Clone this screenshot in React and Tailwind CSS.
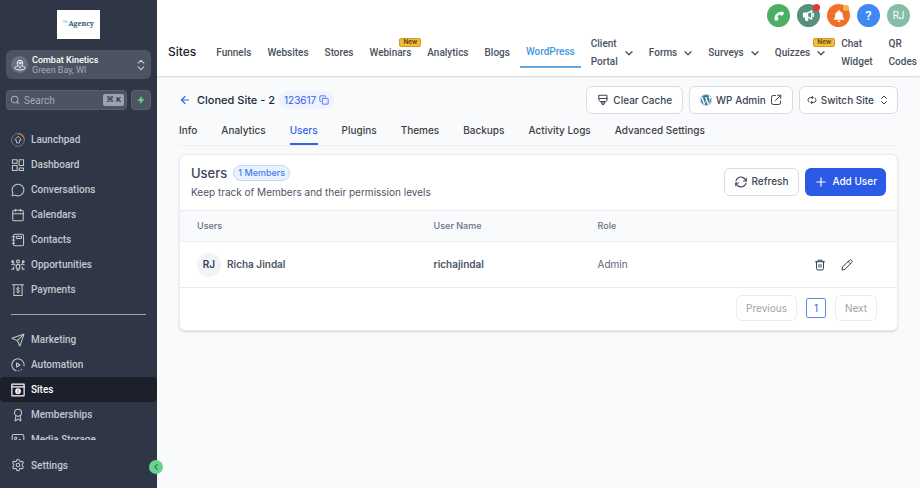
import {
  ArrowLeft,
  Award,
  Calendar,
  ChevronLeft,
  ChevronsUpDown,
  Copy,
  MessageCircle,
  Plus,
  Search,
  Send,
  Settings,
} from "lucide-react";
import { FaBell, FaWordpress } from "react-icons/fa";

function Icon({ children, className = "size-3.5", stroke = 1.8 }) {
  return (
    <svg
      viewBox="0 0 24 24"
      fill="none"
      stroke="currentColor"
      strokeWidth={stroke}
      strokeLinecap="round"
      strokeLinejoin="round"
      className={`shrink-0 ${className}`}
      aria-hidden="true"
    >
      {children}
    </svg>
  );
}

function LaunchpadIcon() {
  return (
    <Icon stroke={1.5}>
      <circle cx="12" cy="12" r="11" className="text-[#7c8492]" stroke="currentColor" />
      <path d="M13 1a11 11 0 0 1 9 6.500" className="text-[#d98038]" stroke="currentColor" strokeWidth="2" />
      <path d="m12 6-5 5v1.500h2.500V17h5v-4.500H17V11z" />
    </Icon>
  );
}

function DashboardIcon() {
  return (
    <Icon>
      <rect x="2.500" y="3" width="8" height="6" />
      <rect x="14" y="3" width="7.500" height="10" />
      <rect x="2.500" y="13" width="8" height="8.500" />
      <rect x="14" y="17" width="7.500" height="4.500" />
    </Icon>
  );
}

function ContactsIcon() {
  return (
    <Icon>
      <rect x="4.500" y="2" width="17" height="20" rx="2.500" />
      <rect x="9" y="5.500" width="9" height="4" rx="1" />
      <path d="M2 6.500h4M2 12h4M2 17.500h4" />
    </Icon>
  );
}

function OpportunitiesIcon() {
  return (
    <Icon stroke={2}>
      <circle cx="12" cy="6" r="2.500" />
      <path d="M12 11c-2 0-3 1.500-3 3.500V17l1.500 1v3h3v-3l1.500-1v-2.500c0-2-1-3.500-3-3.500z" />
      <circle cx="3" cy="6.500" r="1.500" fill="currentColor" />
      <circle cx="21" cy="6.500" r="1.500" fill="currentColor" />
      <path d="M1.500 11.500 5 10l2 2M22.500 11.500 19 10l-2 2M1.500 19h3v-3.500M22.500 19h-3v-3.500" />
    </Icon>
  );
}

function PaymentsIcon() {
  return (
    <Icon>
      <path d="M2.500 3h19M5 3v18.500h14V3" />
      <path d="M14.500 9.500c-.5-1-1.300-1.300-2.500-1.300-1.500 0-2.500.7-2.500 1.900 0 2.700 5.200 1.200 5.200 4 0 1.200-1.200 1.900-2.700 1.900-1.300 0-2.200-.4-2.700-1.400M12 6.800v10.700" strokeWidth="1.500" />
    </Icon>
  );
}

function AutomationIcon() {
  return (
    <Icon>
      <path d="M9 22A10.500 10.500 0 1 1 22.300 13.500" />
      <path d="M9.500 8.500v7l6-3.500z" />
      <path d="M13 22h1M17.500 20l.5-.5" />
    </Icon>
  );
}

function SitesIcon() {
  return (
    <Icon stroke={2}>
      <rect x="1.500" y="2" width="21" height="20" />
      <path d="M1.500 6.500h21" />
      <circle cx="12" cy="14" r="3.800" fill="currentColor" />
      <path d="M12 11.500v5" className="text-[#1b202b]" stroke="currentColor" strokeWidth="1" />
    </Icon>
  );
}

function MediaIcon() {
  return (
    <Icon>
      <rect x="2" y="2.500" width="20" height="18" rx="3" />
      <circle cx="8" cy="9" r="2" />
      <path d="m6 20 9-9 7 6" />
    </Icon>
  );
}

function PinIcon() {
  return (
    <Icon className="size-3" stroke={2}>
      <path d="M12 17c-3.500-3.500-5.500-6-5.500-9a5.500 5.500 0 0 1 11 0c0 3-2 5.500-5.500 9z" />
      <circle cx="12" cy="8" r="2" />
      <path d="M7 14c-3 .8-5 2-5 3.800C2 20.500 6.500 22 12 22s10-1.500 10-4.200c0-1.800-2-3-5-3.800" />
    </Icon>
  );
}

function DownIcon() {
  return (
    <svg viewBox="0 0 8 5" className="h-[5px] w-2 shrink-0" fill="none" stroke="currentColor" strokeWidth="1.300" strokeLinecap="round" strokeLinejoin="round" aria-hidden="true">
      <path d="m1 .8 3 3 3-3" />
    </svg>
  );
}

function BrushIcon() {
  return (
    <Icon className="size-3" stroke={2}>
      <path d="M4 2.500h16V12c0 1.700-1 3-3 3H7c-2 0-3-1.300-3-3z" />
      <path d="M4 9h16M7.500 15l1.500 3h6l1.500-3M9.500 18v1a2.500 2.500 0 0 0 5 0v-1" />
    </Icon>
  );
}

function ExternalIcon() {
  return (
    <Icon className="size-3" stroke={2}>
      <path d="M11 3H6.500A3.500 3.500 0 0 0 3 6.500v11A3.500 3.500 0 0 0 6.500 21h11a3.500 3.500 0 0 0 3.500-3.500V14" />
      <path d="M15 2.500h6.500V9M21.500 2.500 11 13" />
    </Icon>
  );
}

function SwitchIcon() {
  return (
    <Icon className="size-2.5" stroke={2.4}>
      <path d="M14 6H8a6 6 0 0 0-3.500 10.500M10 18h6a6 6 0 0 0 3.500-10.500" />
      <path d="m12 3 3 3-3 3M12 15l-3 3 3 3" />
    </Icon>
  );
}

function RefreshIcon() {
  return (
    <Icon className="size-3" stroke={2.2}>
      <path d="M22.500 4.500v5.500H17M1.500 19.500V14H7" />
      <path d="M22 10A10.300 10.300 0 0 0 5.500 4.500a10 10 0 0 0-3.500 5M2 14a10.300 10.300 0 0 0 16.500 5.500 10 10 0 0 0 3.500-5" />
    </Icon>
  );
}

function TrashIcon() {
  return (
    <Icon className="size-3" stroke={2}>
      <path d="M3 5.500h18M8 5V2.500h8V5M5 5.500V19a3 3 0 0 0 3 3h8a3 3 0 0 0 3-3V5.500M10 11v5.500M14 11v5.500" />
    </Icon>
  );
}

function PencilIcon() {
  return (
    <Icon className="size-3" stroke={2}>
      <path d="m3 16.500-1 5.500 5.500-1L21.300 7.200a3 3 0 0 0 0-4.200l-.3-.3a3 3 0 0 0-4.200 0zM14.500 5l4.500 4.500" />
    </Icon>
  );
}

function PhoneIcon() {
  return (
    <svg viewBox="0 0 24 24" className="size-3" fill="currentColor" stroke="currentColor" strokeLinejoin="round" aria-hidden="true">
      <path d="M4 20.500C1.500 10 10 2 21 4.500L20 10l-5.500.5-.5-2.500c-3 1-5.500 3.500-6 6.500l2.500.5-1 5.500z" />
    </svg>
  );
}

function MegaphoneIcon() {
  return (
    <svg viewBox="0 0 24 24" className="size-[13px]" fill="none" stroke="currentColor" strokeWidth="2.500" strokeLinejoin="round" aria-hidden="true">
      <path d="M3 7.500h7v7H3z" fill="currentColor" />
      <path d="M10 7.500 18 3.500v15l-8-4z" />
      <path d="M6 14.500 7.500 21h3L9 14.500" fill="currentColor" />
      <path d="M21 8.500v5" strokeLinecap="round" />
    </svg>
  );
}

const MAIN_LINKS = [
  { label: "Launchpad", icon: <LaunchpadIcon /> },
  { label: "Dashboard", icon: <DashboardIcon /> },
  { label: "Conversations", icon: <MessageCircle className="size-3.5 shrink-0" strokeWidth={1.8} /> },
  { label: "Calendars", icon: <Calendar className="size-3.5 shrink-0" strokeWidth={1.8} /> },
  { label: "Contacts", icon: <ContactsIcon /> },
  { label: "Opportunities", icon: <OpportunitiesIcon /> },
  { label: "Payments", icon: <PaymentsIcon /> },
];

const MORE_LINKS = [
  { label: "Marketing", icon: <Send className="size-3.5 shrink-0" strokeWidth={1.8} /> },
  { label: "Automation", icon: <AutomationIcon /> },
  { label: "Sites", icon: <SitesIcon />, active: true },
  { label: "Memberships", icon: <Award className="size-3.5 shrink-0" strokeWidth={1.8} /> },
  { label: "Media Storage", icon: <MediaIcon /> },
];

const TOP_LINKS = [
  { label: "Funnels" },
  { label: "Websites" },
  { label: "Stores" },
  { label: "Webinars", isNew: true },
  { label: "Analytics" },
  { label: "Blogs" },
  { label: "WordPress", active: true },
  { label: "Client Portal", menu: true },
  { label: "Forms", menu: true },
  { label: "Surveys", menu: true },
  { label: "Quizzes", menu: true, isNew: true },
  { label: "Chat Widget" },
  { label: "QR Codes" },
];

const TABS = ["Info", "Analytics", "Users", "Plugins", "Themes", "Backups", "Activity Logs", "Advanced Settings"];

const USERS = [{ initials: "RJ", name: "Richa Jindal", username: "richajindal", role: "Admin" }];

function SideLink({ label, icon, active }) {
  return (
    <a
      href="#"
      className={`flex h-[25px] shrink-0 items-center gap-1.5 rounded-sm pl-[11px] ${
        active ? "bg-[#1b202b] text-white" : "text-[#c3c8d0]"
      }`}
    >
      {icon}
      <span>{label}</span>
    </a>
  );
}

function Sidebar() {
  return (
    <aside className="relative flex w-[157px] shrink-0 flex-col bg-[#2f3747] font-['Roboto',sans-serif] text-[10px] font-medium">
      <div className="mx-auto mt-2.5 flex h-[29px] w-[43px] shrink-0 items-center justify-center bg-white font-['Noto_Serif','Liberation_Serif',serif] text-[7px] font-bold text-[#2a5a66]">
        <span className="mb-1 text-[3px] font-normal text-[#4bb5a8]">The</span>Agency
      </div>

      <button
        type="button"
        className="mx-1.5 mt-[11px] flex h-[29px] shrink-0 items-center gap-1 rounded-md bg-[#4c5462] pr-[3px] pl-[5px] text-left"
      >
        <span className="flex size-[17px] shrink-0 items-center justify-center rounded-full bg-[#697180] text-gray-100">
          <PinIcon />
        </span>
        <span className="flex-1 text-[9px] leading-[10px]">
          <span className="block text-white">Combat Kinetics</span>
          <span className="block font-normal text-[#a5abb6]">Green Bay, WI</span>
        </span>
        <ChevronsUpDown className="size-3.5 text-gray-300" strokeWidth={1.8} />
      </button>

      <div className="mx-1.5 mt-[11px] flex shrink-0 gap-1">
        <label className="flex h-5 min-w-0 flex-1 items-center gap-1 rounded border border-[#596170] bg-[#4c5462] pr-[2px] pl-[3px] text-[#a5abb6]">
          <Search className="size-2.5 shrink-0" strokeWidth={2.5} />
          <input
            type="text"
            aria-label="Search"
            placeholder="Search"
            className="w-0 min-w-0 flex-1 font-normal outline-none placeholder:text-[#a5abb6]"
          />
          <kbd className="rounded-xs bg-[#9ca2af] px-[3px] font-['Roboto',sans-serif] text-[8px] leading-3 font-medium text-[#232936]">⌘ K</kbd>
        </label>
        <button
          type="button"
          aria-label="Quick actions"
          className="flex size-5 items-center justify-center rounded border border-[#596170] bg-[#4c5462] text-[#62d399]"
        >
          <svg viewBox="0 0 24 24" className="size-2" fill="currentColor" stroke="currentColor" strokeWidth="2" strokeLinejoin="round" aria-hidden="true">
            <path d="M13.500 2 3 14h8l-1 8L21 10h-8z" />
          </svg>
        </button>
      </div>

      <nav className="mt-[17px] flex min-h-0 flex-1 flex-col overflow-hidden">
        {MAIN_LINKS.map((link) => (
          <SideLink key={link.label} {...link} />
        ))}
        <hr className="mx-[11px] mt-3 mb-3 shrink-0 border-[#a0a6b0]" />
        {MORE_LINKS.map((link) => (
          <SideLink key={link.label} {...link} />
        ))}
      </nav>

      <div className="flex h-12 shrink-0 flex-col justify-center pt-0.5">
        <SideLink label="Settings" icon={<Settings className="size-3.5 shrink-0" strokeWidth={1.8} />} />
      </div>

      <button
        type="button"
        aria-label="Collapse sidebar"
        className="absolute -right-1.5 bottom-3.5 z-10 flex size-3.5 items-center justify-center rounded-full bg-[#68d391] text-[#22543d]"
      >
        <ChevronLeft className="size-2.5" strokeWidth={2.5} />
      </button>
    </aside>
  );
}

function TopBar() {
  const circle = "relative flex size-[23px] items-center justify-center rounded-full text-white";

  return (
    <header className="flex h-[76px] shrink-0 flex-col bg-white font-['Roboto',sans-serif] shadow-[0_1px_2px_rgba(0,0,0,0.16)]">
      <div className="flex h-[27px] items-end justify-end gap-[7px] pr-2.5">
        <button type="button" aria-label="Call" className={`${circle} bg-[#4caf64]`}>
          <PhoneIcon />
        </button>
        <button type="button" aria-label="Announcements" className={`${circle} bg-[#55917f]`}>
          <MegaphoneIcon />
          <span className="absolute top-0 right-0 size-[7px] rounded-full bg-[#ef3329]" />
        </button>
        <button type="button" aria-label="Notifications" className={`${circle} bg-[#f0702a]`}>
          <FaBell className="size-3" />
          <span className="absolute top-px right-px size-1.5 rounded-full bg-[#f6b63c]" />
        </button>
        <button type="button" aria-label="Help" className={`${circle} bg-[#4189f2] text-[13px] font-medium`}>
          ?
        </button>
        <button type="button" aria-label="Account" className={`${circle} bg-[#86bda6] text-[10px]`}>
          RJ
        </button>
      </div>

      <div className="flex h-[49px] items-center pl-[11px]">
        <h1 className="mr-5 font-['Inter',sans-serif] text-[12px] font-medium text-[#1a202c]">Sites</h1>
        <nav className="flex h-full items-center gap-4 pt-[3px] text-[10px] leading-[18px] font-medium text-[#4a5160]">
          {TOP_LINKS.map(({ label, menu, isNew, active }) => (
            <a
              key={label}
              href="#"
              className={`relative flex items-center gap-[7px] ${
                active ? "-mx-1.5 h-[30px] border-b-2 border-[#62a8de] px-1.5 text-[#4299e1]" : ""
              }`}
            >
              <span className="w-min">{label}</span>
              {menu && <DownIcon />}
              {isNew && (
                <span className="absolute -top-1.5 -right-2.5 rounded-xs border border-[#d39b24] bg-[#f3bd3a] px-[3px] text-[7px] leading-[7px] text-[#5c4210]">
                  New
                </span>
              )}
            </a>
          ))}
        </nav>
      </div>
    </header>
  );
}

function OutlineButton({ children, className = "" }) {
  return (
    <button
      type="button"
      className={`flex h-7 items-center gap-1 rounded-md border border-[#d9dce3] bg-white text-[10px] font-medium text-[#3b4556] ${className}`}
    >
      {children}
    </button>
  );
}

function UsersCard() {
  return (
    <section className="mt-2 overflow-hidden rounded-md border border-[#eaecf0] bg-white shadow-[0_1px_2px_rgba(16,24,40,0.16)]">
      <div className="flex h-[55px] items-center justify-between px-[11px] pb-0.5">
        <div>
          <div className="flex items-center gap-1.5">
            <h2 className="text-[13px] leading-5 font-medium text-[#3b4556]">Users</h2>
            <span className="rounded-full border border-[#bfd6fd] bg-[#eaf2ff] px-1 text-[9px] leading-[14px] font-medium text-[#3f80ee]">
              1 Members
            </span>
          </div>
          <p className="text-[10px] leading-[18px] text-[#4b5565]">Keep track of Members and their permission levels</p>
        </div>
        <div className="flex gap-1.5">
          <OutlineButton className="px-2.5">
            <RefreshIcon />
            Refresh
          </OutlineButton>
          <button
            type="button"
            className="flex h-7 items-center gap-1 rounded-md bg-[#2b5be6] px-[9px] text-[10px] font-medium text-white"
          >
            <Plus className="size-3.5" strokeWidth={2} />
            Add User
          </button>
        </div>
      </div>

      <table className="w-full table-fixed text-left text-[10px] text-[#4b5565]">
        <thead className="border-y border-[#eaecf0] bg-[#f9fafb] text-[9px] text-[#667085]">
          <tr className="h-[31px]">
            <th className="w-[33%] pl-[17px] font-medium">Users</th>
            <th className="w-[23%] pl-[17px] font-medium">User Name</th>
            <th className="w-[22%] pl-4 font-medium">Role</th>
            <th aria-label="Actions" />
          </tr>
        </thead>
        <tbody>
          {USERS.map((user) => (
            <tr key={user.username} className="h-[46px] border-b border-[#eaecf0]">
              <td className="pl-[17px]">
                <div className="flex items-center gap-1.5 font-semibold">
                  <span className="flex size-6 items-center justify-center rounded-full bg-[#f1f3f7] text-[#344054]">
                    {user.initials}
                  </span>
                  {user.name}
                </div>
              </td>
              <td className="pl-[17px] font-semibold">{user.username}</td>
              <td className="pl-4 text-[#5d6676]">{user.role}</td>
              <td className="pr-11">
                <div className="flex justify-end gap-[15px] text-[#344054]">
                  <button type="button" aria-label="Delete user">
                    <TrashIcon />
                  </button>
                  <button type="button" aria-label="Edit user">
                    <PencilIcon />
                  </button>
                </div>
              </td>
            </tr>
          ))}
        </tbody>
      </table>

      <div className="flex h-[42px] items-center justify-end gap-[9px] pr-5 pb-0.5 text-[10px] text-[#9ea3ad]">
        <button type="button" disabled className="h-[26px] rounded-md border border-[#eaecf0] px-[9px]">
          Previous
        </button>
        <button type="button" className="size-5 rounded-xs border border-[#6487ee] text-[#3561e8]">
          1
        </button>
        <button type="button" disabled className="h-[26px] rounded-md border border-[#eaecf0] px-[9px]">
          Next
        </button>
      </div>
    </section>
  );
}

export default function App() {
  return (
    <div className="flex h-screen overflow-hidden bg-[#f9fafc] font-['Inter',sans-serif]">
      <Sidebar />
      <div className="flex min-w-0 flex-1 flex-col">
        <TopBar />
        <main className="flex-1 px-[22px] pt-2.5">
          <div className="flex h-7 items-center justify-between">
            <div className="flex items-center text-[11px] font-medium text-[#1d2939]">
              <a href="#" aria-label="Back" className="mr-1.5 text-[#3561e8]">
                <ArrowLeft className="size-3" strokeWidth={2.2} />
              </a>
              <h2>Cloned Site - 2</h2>
              <button
                type="button"
                className="ml-1 flex h-[18px] items-center gap-[3px] rounded-full bg-[#eef3ff] px-[5px] text-[10px] font-normal text-[#3561e8]"
              >
                123617
                <Copy className="size-2.5" strokeWidth={2} />
              </button>
            </div>
            <div className="flex gap-1.5">
              <OutlineButton className="px-2.5">
                <BrushIcon />
                Clear Cache
              </OutlineButton>
              <OutlineButton className="px-2.5">
                <FaWordpress className="size-3 text-[#2f7398]" />
                WP Admin
                <ExternalIcon />
              </OutlineButton>
              <OutlineButton className="px-[7px]">
                <SwitchIcon />
                Switch Site
                <ChevronsUpDown className="size-3" strokeWidth={2} />
              </OutlineButton>
            </div>
          </div>

          <nav className="flex h-8 gap-6 border-b border-[#f0f1f4] text-[10px] font-medium text-[#3d3f45]">
            {TABS.map((tab) => (
              <a
                key={tab}
                href="#"
                className={`flex items-center border-b-2 pt-[3px] ${
                  tab === "Users" ? "border-[#3561e8] text-[#3561e8]" : "border-transparent"
                }`}
              >
                {tab}
              </a>
            ))}
          </nav>

          <UsersCard />
        </main>
      </div>
    </div>
  );
}
